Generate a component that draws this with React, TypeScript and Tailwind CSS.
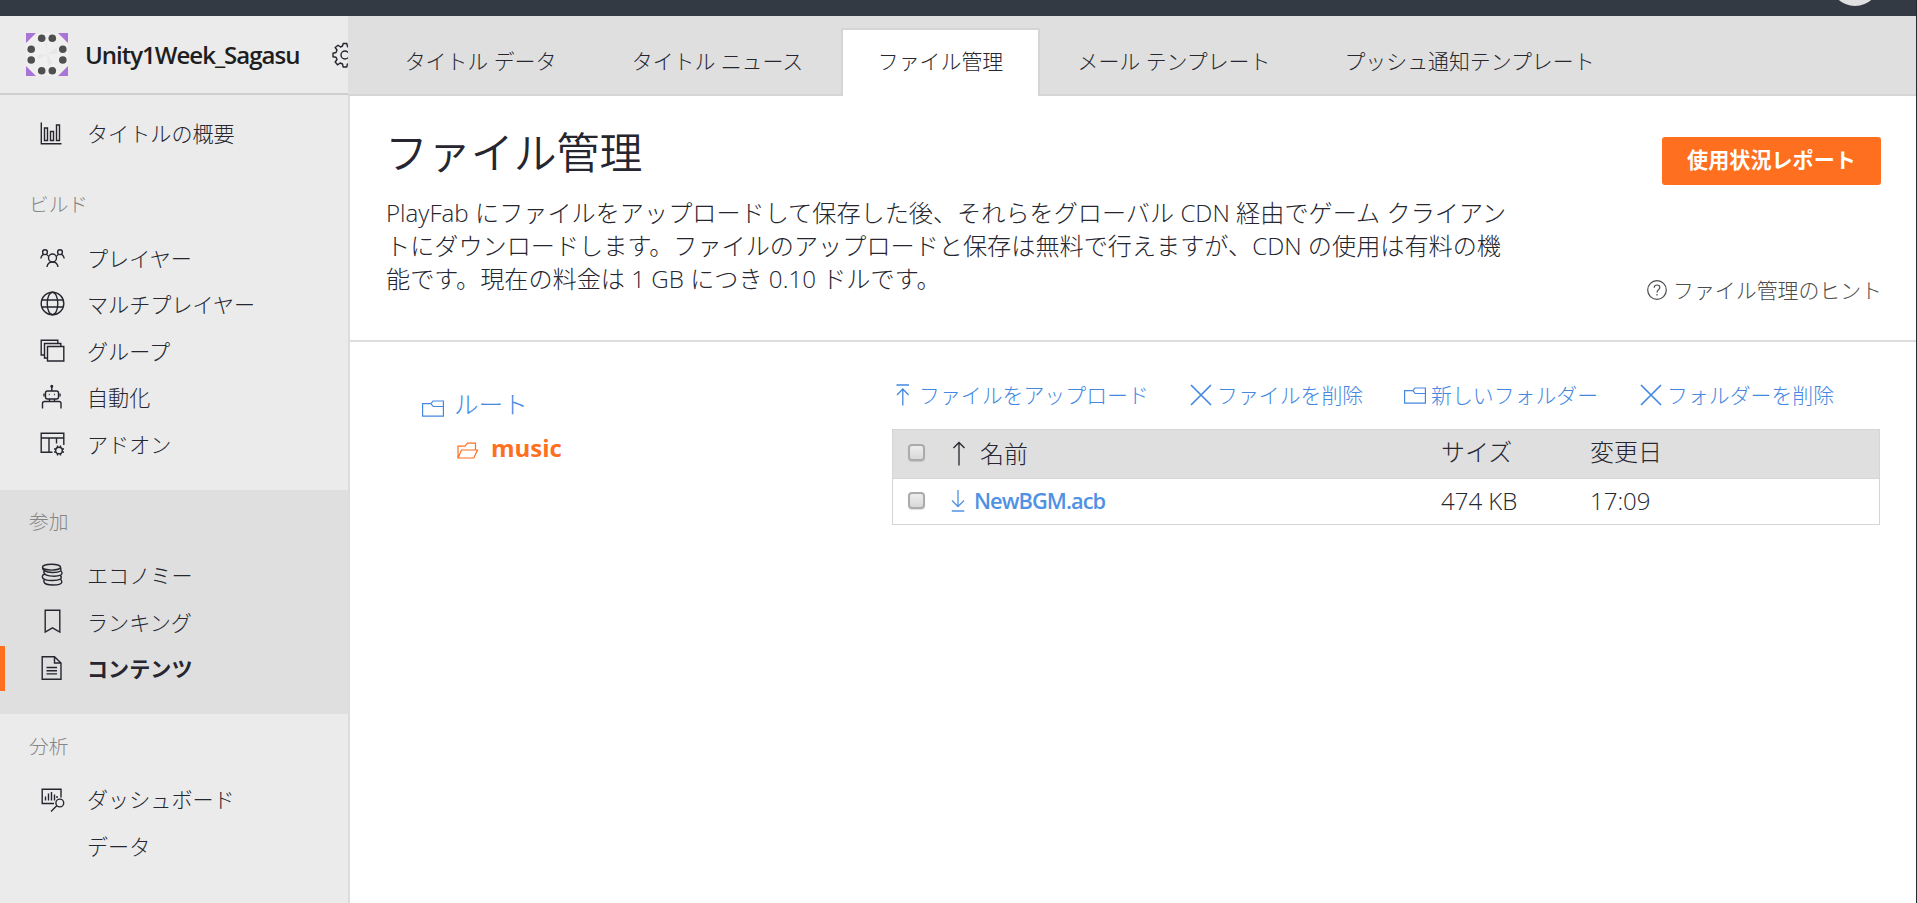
import React from "react";

type IconProps = { className?: string };

const Svg = ({ w, h, sw = 1.4, className = "", children }: { w: number; h: number; sw?: number; className?: string; children: React.ReactNode }) => (
  <svg width={w} height={h} viewBox={`0 0 ${w} ${h}`} fill="none" stroke="currentColor" strokeWidth={sw} className={`shrink-0 ${className}`}>
    {children}
  </svg>
);

const ChartIcon = () => (
  <Svg w={26} h={26}>
    <path d="M2.3 1.5V22.8H22.5M5.5 7H8.5V19.5H5.5ZM11.5 10.5H14.5V19.5H11.5ZM17.5 4H20.5V19.5H17.5Z" />
  </Svg>
);
const PlayersIcon = () => (
  <Svg w={26} h={26}>
    <circle cx="13.5" cy="13" r="4" />
    <circle cx="6" cy="7.2" r="2.4" />
    <circle cx="21" cy="7.2" r="2.4" />
    <path d="M8 22C8.4 18.8 10.2 17 13.5 17S18.6 18.8 19 22M1.800 13.500C2 11.600 2.800 10.300 4.300 9.600M7.800 9.500C8.400 10.500 9 11 9.800 11.200M25.200 13.500C25 11.600 24.200 10.300 22.700 9.600M19.200 9.500C18.600 10.500 18 11 17.200 11.200" />
  </Svg>
);
const GlobeIcon = () => (
  <Svg w={26} h={26}>
    <circle cx="13.5" cy="12.5" r="11.3" />
    <ellipse cx="13.5" cy="12.5" rx="5.3" ry="11.3" />
    <path d="M2.800 9H24.200M2.800 16H24.200" />
  </Svg>
);
const GroupsIcon = () => (
  <Svg w={26} h={26}>
    <path d="M8.500 8.500H24.800V23H8.500ZM8.500 20H5.500V5.500H21.800V8.500M5.500 17H2.200V2.200H18.800V5.500" />
  </Svg>
);
const RobotIcon = () => (
  <Svg w={26} h={26}>
    <rect x="6.500" y="7" width="13" height="8" rx="2" />
    <path d="M12.800 2.500V7M10.500 15V17.500M15.500 15V17.500M3.500 24.500V19.500Q3.500 17.500 5.500 17.500H20Q22 17.500 22 19.500V24.500M5 9.500V12.500M21 9.500V12.500" />
    <circle cx="12.800" cy="2.200" r=".8" fill="currentColor" />
    <path d="M9.800 10.500H10.600M15.200 10.500H16" />
  </Svg>
);
const AddonIcon = () => (
  <Svg w={26} h={26}>
    <path d="M13.500 21.300H2.200V2.200H24.800V14M2.200 7H24.800M10 7V21.300M17.500 7V12.500" />
    <circle cx="20" cy="19.500" r="3.300" />
    <path d="M18.500 14.500V16.300M21.500 14.500V16.300M18.500 22.700V24.500M21.500 22.700V24.500M15 18H16.800M15 21H16.800M23.200 18H25M23.200 21H25" />
  </Svg>
);
const CoinsIcon = () => (
  <Svg w={26} h={26} className="-mt-[1px]">
    <ellipse cx="12.500" cy="5.200" rx="9" ry="2.900" />
    <path d="M3.500 5.500C3.500 7 4 8 5.500 8.700C4.800 9.500 4.800 11 5.800 12C4 12.600 3.300 13.400 3.300 14.500S4.500 17 5.500 17.300C4.800 18.200 4.800 19.500 5 20C5.500 22 9 23 14 23S22.800 22 22.800 20C22.800 18.800 22.500 18 21.500 17.200C22.600 16 22.600 15 21.500 13.500C23.500 12 23.500 10 21.800 9C22 8 22 7 21.500 5.500M5.500 8.700C9 11 18 11 21.800 9M5.800 12C8 14.500 18 14.800 21.500 13.200M5.500 17.300C9 19 18 19 21.500 17.200" />
  </Svg>
);
const BookmarkIcon = () => (
  <Svg w={26} h={26} className="-mt-[2px]">
    <path d="M6.200 2.200H20.800V24L13.500 19.800L6.200 24Z" />
  </Svg>
);
const DocIcon = () => (
  <Svg w={26} h={26} className="-mt-[2px]">
    <path d="M3.200 1.700H15.500L22 8V24.300H3.200ZM15.500 1.700V8H22M7.500 12.500H18M7.500 15.700H18M7.500 18.900H18" />
  </Svg>
);
const DashboardIcon = () => (
  <Svg w={26} h={26}>
    <path d="M15 16.500H3.200V2.200H22V10.500M6.500 9.500V13.500M9.500 6.500V13.500M12.500 5V13.500M15.500 7.500V13.500M18 9V11M18 18.500L12 24.500" />
    <circle cx="20.800" cy="16" r="3.900" />
  </Svg>
);
const GearIcon = () => (
  <Svg w={26} h={26}>
    <circle cx="13" cy="13" r="4" />
    <path d="M11.200 1.500H14.800L15.500 4.700L18 5.700L20.800 4L23 7L21.300 9.500L22 11.500L25 12V15L22 15.700L21 18L22.800 20.700L20 23L17.500 21.300L15.300 22.200L14.800 25H11.200L10.500 22L8.200 21L5.500 22.800L3.200 20L5 17.500L4 15.200L1 14.800V11.200L4 10.500L5 8L3.200 5.500L6 3.200L8.500 5L10.500 4Z" strokeLinejoin="round" />
  </Svg>
);
const FolderIcon = ({ className }: IconProps) => (
  <Svg w={22} h={17} sw={1.2} className={className}>
    <path d="M.6 3.600H9L11 1H21.400V16.200H.6ZM9 3.600L11.200 6.500H21.400" />
  </Svg>
);
const FolderOpenIcon = () => (
  <Svg w={22} h={17} sw={1.2}>
    <path d="M1 16V4.200H8L10.500 1.200H18.500V8M1 16L4.500 8H20.500L16.800 16Z" />
  </Svg>
);
const UploadIcon = () => (
  <Svg w={14} h={22} sw={1.3}>
    <path d="M.5 1H13M6.800 21.500V5M1 11L6.800 5L12.600 11" />
  </Svg>
);
const DownloadIcon = () => (
  <Svg w={14} h={22} sw={1.3}>
    <path d="M.8 21H13.300M7 0V16.500M1 10.500L7 16.500L13 10.500" />
  </Svg>
);
const SortIcon = () => (
  <Svg w={14} h={25} sw={1.3} className="-mt-[2px]">
    <path d="M7 24.500V1.500M1.500 7L7 1.500L12.500 7" />
  </Svg>
);
const CrossIcon = () => (
  <Svg w={22} h={22} sw={1.7}>
    <path d="M1 1L21 21M21 1L1 21" />
  </Svg>
);
const HelpIcon = () => (
  <Svg w={20} h={20} sw={1.2}>
    <circle cx="10" cy="10" r="9.300" />
    <path d="M7.200 7.800C7.200 6 8.400 5 10 5S12.800 6 12.800 7.600C12.800 9.600 10 9.800 10 12.500M10 14V15.500" />
  </Svg>
);

const Logo = () => (
  <svg width="42" height="43" viewBox="0 0 42 43" className="shrink-0">
    <rect width="42" height="43" fill="#efefef" />
    <path d="M0 0H10L0 10ZM42 0V10L32 0ZM0 43V33L10 43ZM42 43H32L42 33Z" fill="#a974d6" />
    <path d="M21 21L19 10L21 10ZM21 21L31 15V21ZM21 21L22 32L27 30ZM21 21L12 26V22Z" fill="#e7e7e7" />
    <g fill="#4f4f4f">
      <circle cx="15.700" cy="5.300" r="3.800" /><circle cx="26.300" cy="5.300" r="3.800" />
      <circle cx="15.700" cy="37.700" r="3.800" /><circle cx="26.300" cy="37.700" r="3.800" />
      <circle cx="5.200" cy="16.200" r="3.800" /><circle cx="5.200" cy="27" r="3.800" />
      <circle cx="36.800" cy="16.200" r="3.800" /><circle cx="36.800" cy="27" r="3.800" />
    </g>
  </svg>
);

const NavItem = ({ icon, label, active = false }: { icon?: React.ReactNode; label: string; active?: boolean }) => (
  <li className="relative flex h-[46.5px] items-center pl-[38.500px]">
    {active && <span className="absolute left-0 top-px h-[45px] w-[5px] bg-[#ff6f20]" />}
    <span className="flex w-[26px] justify-center">{icon}</span>
    <span className={active ? "ml-[22.500px] pt-px font-bold" : "ml-[22.500px] pt-px"}>{label}</span>
  </li>
);

const Heading = ({ children }: { children: React.ReactNode }) => (
  <h2 className="ml-[29px] flex h-8 items-center text-[19.700px] text-[#858585]">{children}</h2>
);

const Tab = ({ label, className }: { label: string; className: string }) => (
  <a className={`flex items-center justify-center text-[20.900px] ${className}`}>{label}</a>
);

const Check = ({ className = "" }: IconProps) => (
  <span className={`block h-[17px] w-[17px] rounded-[4px] border-2 border-[#ababab] bg-linear-to-b from-[#ededed] to-[#d9d9d9] shadow-[0_1px_1px_rgba(0,0,0,0.12)] ${className}`} />
);

export default function App() {
  return (
    <div className="relative flex h-[903px] w-[1917px] flex-col overflow-hidden border-r border-[#26292e] bg-white font-['Open_Sans','Noto_Sans_CJK_JP',sans-serif] text-[21.100px] leading-none font-light text-[#25262f]">
      <header className="relative h-4 shrink-0 overflow-hidden bg-[#333a44]">
        <span className="absolute left-[1830px] top-[-44px] h-[50px] w-[50px] rounded-full bg-[#e0e0e0]" />
      </header>
      <div className="flex min-h-0 flex-1">
        <aside className="w-[350px] shrink-0 bg-[#ebebeb]">
          <div className="flex h-[79px] w-[348px] items-center overflow-hidden border-b-2 border-[#cfcfcf] pl-[26px]">
            <Logo />
            <span className="ml-[17px] w-[247px] shrink-0 pt-px text-[24px] font-semibold tracking-[-1px] text-[#1e1e1e]">Unity1Week_Sagasu</span>
            <GearIcon />
          </div>
          <div className="h-[808px] border-r-2 border-[#dcdcdc]">
            <ul className="pt-[15.250px]"><NavItem icon={<ChartIcon />} label="タイトルの概要" /></ul>
            <section className="pt-[32.250px] pb-[23px]">
              <Heading>ビルド</Heading>
              <ul className="mt-[13.500px]">
                <NavItem icon={<PlayersIcon />} label="プレイヤー" />
                <NavItem icon={<GlobeIcon />} label="マルチプレイヤー" />
                <NavItem icon={<GroupsIcon />} label="グループ" />
                <NavItem icon={<RobotIcon />} label="自動化" />
                <NavItem icon={<AddonIcon />} label="アドオン" />
              </ul>
            </section>
            <section className="h-[224px] bg-[#dfdfdf] pt-4">
              <Heading>参加</Heading>
              <ul className="mt-[14.250px]">
                <NavItem icon={<CoinsIcon />} label="エコノミー" />
                <NavItem icon={<BookmarkIcon />} label="ランキング" />
                <NavItem icon={<DocIcon />} label="コンテンツ" active />
              </ul>
            </section>
            <section className="pt-[17px]">
              <Heading>分析</Heading>
              <ul className="mt-[13.250px]">
                <NavItem icon={<DashboardIcon />} label="ダッシュボード" />
                <NavItem label="データ" />
              </ul>
            </section>
          </div>
        </aside>
        <main className="flex min-w-0 flex-1 flex-col">
          <nav className="-ml-[2px] flex h-20 shrink-0 border-b-2 border-[#d5d5d5] bg-[#dfdfdf] pl-[19px]">
            <Tab label="タイトル データ" className="w-[227px] pt-[13px]" />
            <Tab label="タイトル ニュース" className="w-[247px] pt-[13px]" />
            <Tab label="ファイル管理" className="mt-3 -mb-[2px] w-[199px] border-2 border-b-0 border-[#d5d5d5] bg-white pb-[3px]" />
            <Tab label="メール テンプレート" className="w-[268px] pt-[13px]" />
            <Tab label="プッシュ通知テンプレート" className="w-[323px] pt-[13px]" />
          </nav>
          <section className="flex h-[246px] shrink-0 justify-between border-b-2 border-[#dddddd] pr-[35px] pl-[36px]">
            <div className="pt-[35.500px]">
              <h1 className="-ml-px text-[42.900px] font-[350]">ファイル管理</h1>
              <p className="mt-[21.600px] w-[1140px] text-[24.150px] leading-[33px] whitespace-nowrap">
                PlayFab にファイルをアップロードして保存した後、それらをグローバル CDN 経由でゲーム クライアン<br />
                トにダウンロードします。ファイルのアップロードと保存は無料で行えますが、CDN の使用は有料の機<br />
                能です。現在の料金は 1 GB につき 0.10 ドルです。
              </p>
            </div>
            <div className="flex flex-col items-end pt-[41px]">
              <button className="h-12 w-[219px] rounded-[3px] bg-[#ff6f20] pb-0.5 font-bold text-white">使用状況レポート</button>
              <a className="-mr-px mt-[95px] flex items-center gap-[6px] text-[20.900px] text-[#4c4c4c]"><HelpIcon />ファイル管理のヒント</a>
            </div>
          </section>
          <div className="flex">
            <div className="w-[542px] pt-[50px] pl-[72px] text-[24px]">
              <div className="flex h-[26px] items-center text-[#4488e0]"><FolderIcon className="mt-[7px]" /><span className="ml-[10px] text-[24.600px]">ルート</span></div>
              <div className="mt-[18px] flex items-center pl-[35px] font-bold text-[#ff6f20]"><span className="mt-1"><FolderOpenIcon /></span><span className="ml-[12px]">music</span></div>
            </div>
            <div className="w-[988px] pt-[41px]">
              <div className="flex h-[24px] items-center pl-[4px] text-[20.900px] text-[#4488e0]">
                <a className="flex w-[294px] items-center gap-[9px]"><UploadIcon />ファイルをアップロード</a>
                <a className="flex w-[214px] items-center gap-[5px]"><CrossIcon />ファイルを削除</a>
                <a className="flex w-[236px] items-center gap-[5px]"><FolderIcon />新しいフォルダー</a>
                <a className="flex items-center gap-[5px]"><CrossIcon />フォルダーを削除</a>
              </div>
              <div className="mt-[22px] border border-[#d5d5d5] text-[24px]">
                <div className="flex h-[49px] items-center border-b border-[#d5d5d5] bg-[#dfdfdf] pl-[15px]">
                  <Check className="-mt-[3px]" />
                  <span className="ml-[27px] flex w-[489px] items-center gap-[14px]"><SortIcon />名前</span>
                  <span className="w-[149px] pb-[4px]">サイズ</span>
                  <span className="pb-[4px]">変更日</span>
                </div>
                <div className="flex h-[45px] items-center bg-white pl-[15px]">
                  <Check className="-mt-[2px]" />
                  <span className="ml-[26px] flex w-[490px] items-center gap-[9px] font-semibold text-[#4f92e3]"><DownloadIcon /><span className="pb-px text-[21.800px] tracking-[-0.950px]">NewBGM.acb</span></span>
                  <span className="w-[149px] pb-px">474 KB</span>
                  <span className="pb-px">17:09</span>
                </div>
              </div>
            </div>
          </div>
        </main>
      </div>
    </div>
  );
}
